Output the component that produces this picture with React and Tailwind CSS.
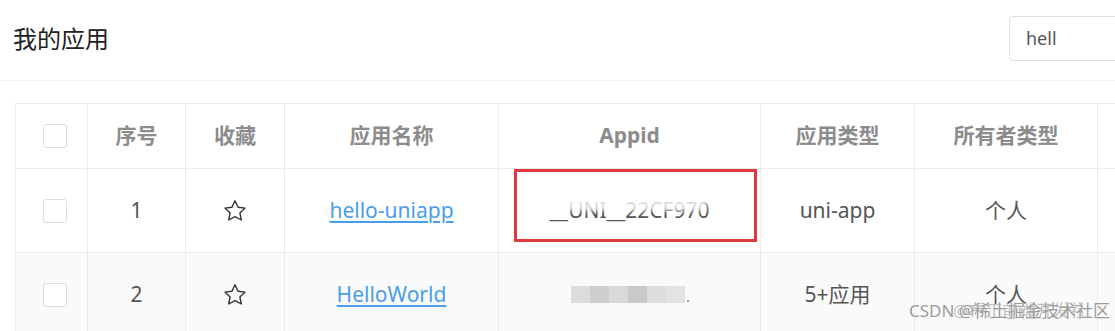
import React from 'react'

const cols = 'grid grid-cols-[72px_98px_99px_214px_262px_154px_183px_127px]'

function Star() {
  return (
    <svg width="26" height="26" viewBox="0 0 24 24" fill="none">
      <polygon
        points="12,2.6 14.8,8.5 21.3,9.3 16.5,13.8 17.8,20.3 12,17.1 6.2,20.3 7.5,13.8 2.7,9.3 9.2,8.5"
        stroke="#333"
        strokeWidth="1.3"
        strokeLinejoin="round"
      />
    </svg>
  )
}

function Checkbox() {
  return <span className="block ml-[7px] w-[24px] h-[24px] rounded-[3px] border border-[#dcdcdc] bg-white" />
}

function Cell({ children, className = '' }) {
  return (
    <div className={`relative flex items-center justify-center border-r border-b border-[#ebebeb] ${className}`}>
      {children}
    </div>
  )
}

function Mosaic() {
  const shades = ['bg-[#dcdcdc]', 'bg-[#cecece]', 'bg-[#d9d9d9]', 'bg-[#c9c9c9]', 'bg-[#dddddd]', 'bg-[#e3e3e3]']
  return (
    <div className="flex items-end gap-[2px]">
      <div className="flex h-[17px]">
        {shades.map((s, i) => (
          <span key={i} className={`block w-[19px] h-full ${s}`} />
        ))}
      </div>
      <span className="block w-[2px] h-[2px] bg-[#999] mb-[1px]" />
    </div>
  )
}

export default function App() {
  const rows = [
    { n: 1, name: 'hello-uniapp', type: 'uni-app', owner: '个人', bg: 'bg-white' },
    { n: 2, name: 'HelloWorld', type: '5+应用', owner: '个人', bg: 'bg-[#fafafa]' },
  ]

  return (
    <div className="relative h-screen w-full overflow-hidden bg-white font-['Noto_Sans','Noto_Sans_CJK_SC',sans-serif]">
      <div className="w-[1240px]">
        {/* top bar */}
        <div className="flex items-center h-[81px] pl-[13px] pr-[15px] border-b border-[#f2f2f2]">
          <h1 className="text-[24px] text-[#222] leading-none pb-[2px]">我的应用</h1>
          <div className="ml-auto mb-[4px] w-[216px] h-[45px] rounded-[4px] border border-[#dcdfe6] flex items-center px-[16px]">
            <span className="text-[18px] text-[#555]">hell</span>
          </div>
        </div>

        {/* table */}
        <div className={`${cols} mt-[22px] ml-[15px] border-l border-t border-[#ebebeb] text-[21px]`}>
          <Cell className="h-[65px]"><Checkbox /></Cell>
          {['序号', '收藏', '应用名称', 'Appid', '应用类型', '所有者类型', ''].map((h, i) => (
            <Cell key={i} className="h-[65px] font-bold text-[#8c8c8c]">{h}</Cell>
          ))}

          {rows.map((r) => (
            <React.Fragment key={r.n}>
              <Cell className={`h-[84px] ${r.bg}`}><Checkbox /></Cell>
              <Cell className={`h-[84px] ${r.bg} text-[#555]`}>{r.n}</Cell>
              <Cell className={`h-[84px] ${r.bg}`}><Star /></Cell>
              <Cell className={`h-[84px] ${r.bg}`}>
                <a className="text-[#4a9ee9] underline underline-offset-[3px] decoration-[2px]">{r.name}</a>
              </Cell>
              <Cell className={`h-[84px] ${r.bg}`}>
                {r.n === 1 ? (
                  <>
                    <span className="relative text-[#555]">
                      __UNI__22CF970
                      <span className="absolute left-[4px] right-[2px] top-[3px] h-[13px] bg-white/80 blur-[2px]" />
                    </span>
                    <span className="absolute left-[15px] top-0 w-[243px] h-[73px] border-[3px] border-[#e03a3e]" />
                  </>
                ) : (
                  <Mosaic />
                )}
              </Cell>
              <Cell className={`h-[84px] ${r.bg} text-[#555]`}>{r.type}</Cell>
              <Cell className={`h-[84px] ${r.bg} text-[#555]`}>{r.owner}</Cell>
              <Cell className={`h-[84px] ${r.bg}`} />
            </React.Fragment>
          ))}
        </div>
      </div>

      {/* watermark */}
      <div className="absolute left-[909px] top-[302px] text-[17px] leading-none text-[#9a9a9a] whitespace-nowrap [text-shadow:0_0_1px_#fff]">
        <span>CSDN @稀土掘金技术社区</span>
        <span className="absolute left-[44px] top-0 opacity-60">@布丁前端开发社</span>
      </div>
    </div>
  )
}
